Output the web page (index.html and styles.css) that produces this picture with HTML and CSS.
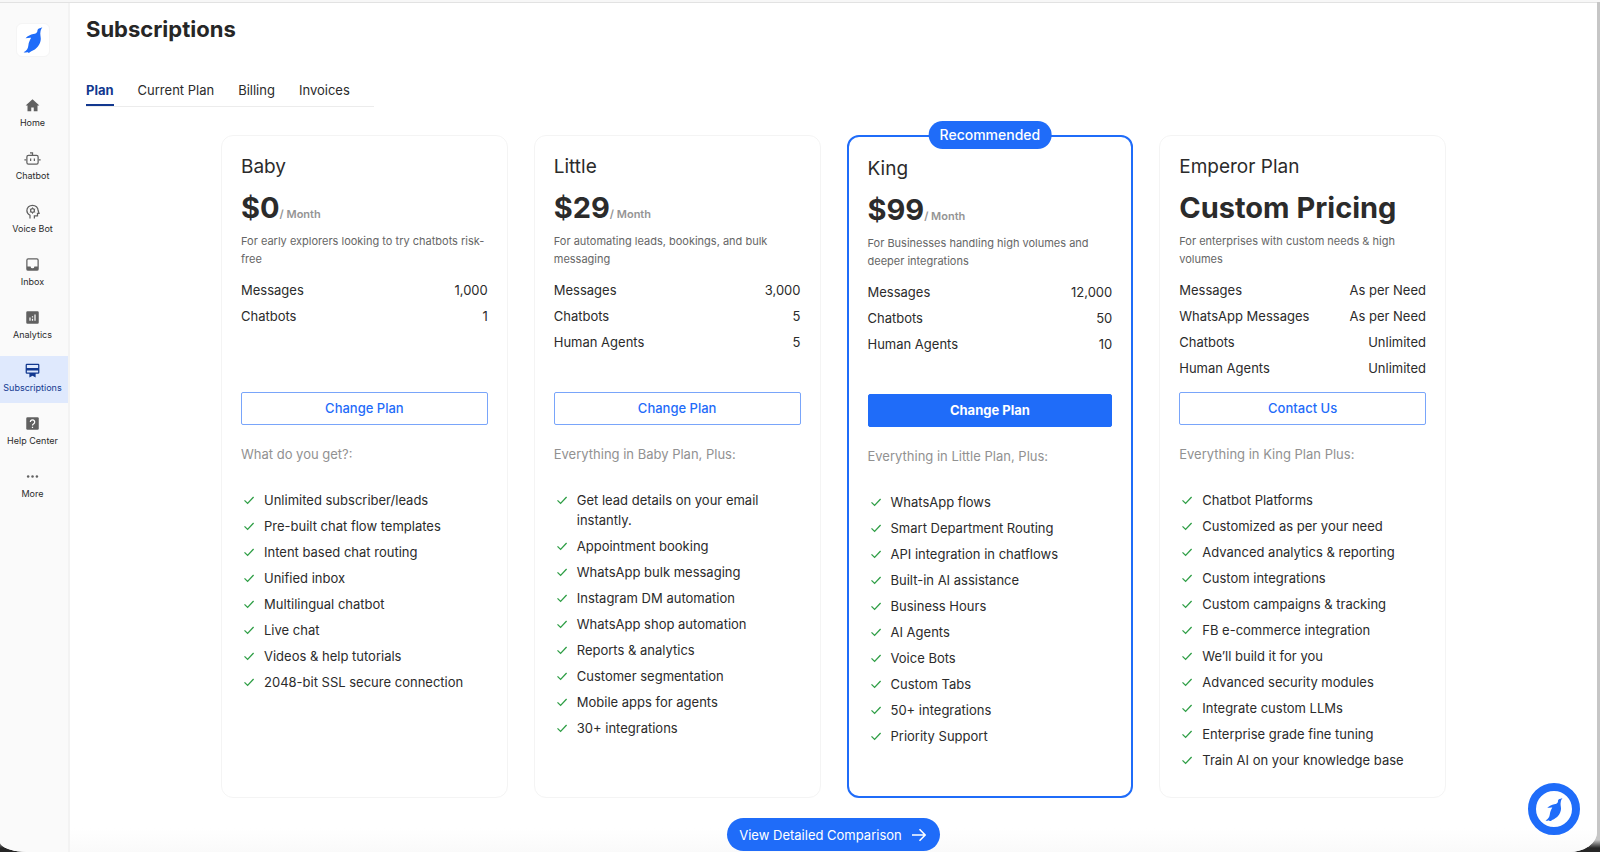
FILE: index.html
```html
<!DOCTYPE html>
<html lang="en">
<head>
<meta charset="utf-8">
<title>Subscriptions</title>
<link rel="stylesheet" href="styles.css">
</head>
<body>
<svg class="defs" aria-hidden="true">
  <symbol id="check" viewBox="0 0 12 12"><path d="M1.5 6.4 4.6 9.4 10.6 3" fill="none" stroke="currentColor" stroke-width="1.3"/></symbol>
  <symbol id="penguin" viewBox="36 24 64 86"><path d="M98 26c-4 2-8 3-11 4-4 2-5 5-5 9-1 5-6 8-13 9-9 2-17 6-25 13 7 0 13-2 18-1-5 9-8 16-9 25-1 9-5 15-15 21 4 2 8 1 12-1l2 3c4 0 7-1 9-4 19-7 31-22 32-40 0-8-3-16-1-24 1-6 3-9 6-14z" fill="#1f6cf9"/></symbol>
</svg>
<div class="window">
  <nav class="sidebar" aria-label="Main">
    <a class="logo" href="#" aria-label="Start page"><svg class="logo-mark"><use href="#penguin"/></svg></a>
    <a class="nav-item" href="#"><svg class="nav-icon" viewBox="0 0 24 24"><path d="M10 21v-6h4v6h6v-9h3L12 2 1 12h3v9z"/></svg>Home</a>
    <a class="nav-item" href="#"><svg class="nav-icon outline" viewBox="0 0 24 24"><path d="M12 7V3H8M2 14H-1m23 0h3M9 12v4m6-4v4"/><rect x="3" y="7" width="18" height="14" rx="2.500"/></svg>Chatbot</a>
    <a class="nav-item" href="#"><svg class="nav-icon outline" viewBox="0 0 24 24"><path d="M8 23v-5C4 16 3 13 3 10.500a9 8.500 0 0 1 18 0L22.500 15H20v4h-5v4"/><circle cx="12" cy="10.500" r="3"/><path d="M12 5.500v2m0 6v2M7.700 8l1.800 1m5 3 1.800 1M7.700 13l1.800-1m5-3 1.800-1" stroke-width="1.600"/></svg>Voice Bot</a>
    <a class="nav-item" href="#"><svg class="nav-icon" viewBox="0 0 24 24"><path d="M19 2H5a3 3 0 0 0-3 3v14a3 3 0 0 0 3 3h14a3 3 0 0 0 3-3V5a3 3 0 0 0-3-3zm1 13h-5a3 3 0 0 1-6 0H4V5a1 1 0 0 1 1-1h14a1 1 0 0 1 1 1z"/></svg>Inbox</a>
    <a class="nav-item" href="#"><svg class="nav-icon" viewBox="0 0 24 24"><path fill-rule="evenodd" d="M4 2h16a2 2 0 0 1 2 2v16a2 2 0 0 1-2 2H4a2 2 0 0 1-2-2V4a2 2 0 0 1 2-2zm3 10v5h2v-5zm4 2v3h2v-3zm0-4v2h2v-2zm4-3v10h2V7z"/></svg>Analytics</a>
    <a class="nav-item active" href="#" aria-current="page"><svg class="nav-icon" viewBox="0 0 24 24"><path fill-rule="evenodd" d="M3 1h18a2 2 0 0 1 2 2v12a2 2 0 0 1-2 2h-4v6l-5-2.500L7 23v-6H3a2 2 0 0 1-2-2V3a2 2 0 0 1 2-2zm0 2v5h18V3zm0 9v3h18v-3z"/></svg>Subscriptions</a>
    <a class="nav-item" href="#"><svg class="nav-icon" viewBox="0 0 24 24"><path d="M4 2h16a2 2 0 0 1 2 2v16a2 2 0 0 1-2 2H4a2 2 0 0 1-2-2V4a2 2 0 0 1 2-2z"/><path d="M8.500 9.500a3.500 3.500 0 1 1 5.500 3c-1.500 1-2 1.300-2 2.800M12 17v2.200" fill="none" stroke="#fff" stroke-width="2"/></svg>Help Center</a>
    <a class="nav-item" href="#"><svg class="nav-icon" viewBox="0 0 24 24"><circle cx="5" cy="12" r="2"/><circle cx="12" cy="12" r="2"/><circle cx="19" cy="12" r="2"/></svg>More</a>
  </nav>
  <main class="content">
    <h1 class="page-title">Subscriptions</h1>
    <nav class="tabs" aria-label="Subscription sections">
      <a class="tab selected" href="#" aria-current="page">Plan</a><a class="tab" href="#">Current Plan</a><a class="tab" href="#">Billing</a><a class="tab" href="#">Invoices</a>
    </nav>
    <div class="plans">
      <section class="card">
        <h2 class="plan-name">Baby</h2>
        <p class="price">$0<span class="period">/ Month</span></p>
        <p class="summary">For early explorers looking to try chatbots risk-free</p>
        <dl class="limits">
          <div class="limit"><dt>Messages</dt><dd>1,000</dd></div>
          <div class="limit"><dt>Chatbots</dt><dd>1</dd></div>
        </dl>
        <button class="choose">Change Plan</button>
        <p class="includes">What do you get?:</p>
        <ul class="features">
          <li><svg class="tick"><use href="#check"/></svg>Unlimited subscriber/leads</li>
          <li><svg class="tick"><use href="#check"/></svg>Pre-built chat flow templates</li>
          <li><svg class="tick"><use href="#check"/></svg>Intent based chat routing</li>
          <li><svg class="tick"><use href="#check"/></svg>Unified inbox</li>
          <li><svg class="tick"><use href="#check"/></svg>Multilingual chatbot</li>
          <li><svg class="tick"><use href="#check"/></svg>Live chat</li>
          <li><svg class="tick"><use href="#check"/></svg>Videos &amp; help tutorials</li>
          <li><svg class="tick"><use href="#check"/></svg>2048-bit SSL secure connection</li>
        </ul>
      </section>
      <section class="card">
        <h2 class="plan-name">Little</h2>
        <p class="price">$29<span class="period">/ Month</span></p>
        <p class="summary">For automating leads, bookings, and bulk messaging</p>
        <dl class="limits">
          <div class="limit"><dt>Messages</dt><dd>3,000</dd></div>
          <div class="limit"><dt>Chatbots</dt><dd>5</dd></div>
          <div class="limit"><dt>Human Agents</dt><dd>5</dd></div>
        </dl>
        <button class="choose">Change Plan</button>
        <p class="includes">Everything in Baby Plan, Plus:</p>
        <ul class="features">
          <li><svg class="tick"><use href="#check"/></svg>Get lead details on your email instantly.</li>
          <li><svg class="tick"><use href="#check"/></svg>Appointment booking</li>
          <li><svg class="tick"><use href="#check"/></svg>WhatsApp bulk messaging</li>
          <li><svg class="tick"><use href="#check"/></svg>Instagram DM automation</li>
          <li><svg class="tick"><use href="#check"/></svg>WhatsApp shop automation</li>
          <li><svg class="tick"><use href="#check"/></svg>Reports &amp; analytics</li>
          <li><svg class="tick"><use href="#check"/></svg>Customer segmentation</li>
          <li><svg class="tick"><use href="#check"/></svg>Mobile apps for agents</li>
          <li><svg class="tick"><use href="#check"/></svg>30+ integrations</li>
        </ul>
      </section>
      <section class="card recommended">
        <span class="badge">Recommended</span>
        <h2 class="plan-name">King</h2>
        <p class="price">$99<span class="period">/ Month</span></p>
        <p class="summary">For Businesses handling high volumes and deeper integrations</p>
        <dl class="limits">
          <div class="limit"><dt>Messages</dt><dd>12,000</dd></div>
          <div class="limit"><dt>Chatbots</dt><dd>50</dd></div>
          <div class="limit"><dt>Human Agents</dt><dd>10</dd></div>
        </dl>
        <button class="choose">Change Plan</button>
        <p class="includes">Everything in Little Plan, Plus:</p>
        <ul class="features">
          <li><svg class="tick"><use href="#check"/></svg>WhatsApp flows</li>
          <li><svg class="tick"><use href="#check"/></svg>Smart Department Routing</li>
          <li><svg class="tick"><use href="#check"/></svg>API integration in chatflows</li>
          <li><svg class="tick"><use href="#check"/></svg>Built-in AI assistance</li>
          <li><svg class="tick"><use href="#check"/></svg>Business Hours</li>
          <li><svg class="tick"><use href="#check"/></svg>AI Agents</li>
          <li><svg class="tick"><use href="#check"/></svg>Voice Bots</li>
          <li><svg class="tick"><use href="#check"/></svg>Custom Tabs</li>
          <li><svg class="tick"><use href="#check"/></svg>50+ integrations</li>
          <li><svg class="tick"><use href="#check"/></svg>Priority Support</li>
        </ul>
      </section>
      <section class="card">
        <h2 class="plan-name">Emperor Plan</h2>
        <p class="price">Custom Pricing</p>
        <p class="summary">For enterprises with custom needs &amp; high volumes</p>
        <dl class="limits">
          <div class="limit"><dt>Messages</dt><dd>As per Need</dd></div>
          <div class="limit"><dt>WhatsApp Messages</dt><dd>As per Need</dd></div>
          <div class="limit"><dt>Chatbots</dt><dd>Unlimited</dd></div>
          <div class="limit"><dt>Human Agents</dt><dd>Unlimited</dd></div>
        </dl>
        <button class="choose">Contact Us</button>
        <p class="includes">Everything in King Plan Plus:</p>
        <ul class="features">
          <li><svg class="tick"><use href="#check"/></svg>Chatbot Platforms</li>
          <li><svg class="tick"><use href="#check"/></svg>Customized as per your need</li>
          <li><svg class="tick"><use href="#check"/></svg>Advanced analytics &amp; reporting</li>
          <li><svg class="tick"><use href="#check"/></svg>Custom integrations</li>
          <li><svg class="tick"><use href="#check"/></svg>Custom campaigns &amp; tracking</li>
          <li><svg class="tick"><use href="#check"/></svg>FB e-commerce integration</li>
          <li><svg class="tick"><use href="#check"/></svg>We’ll build it for you</li>
          <li><svg class="tick"><use href="#check"/></svg>Advanced security modules</li>
          <li><svg class="tick"><use href="#check"/></svg>Integrate custom LLMs</li>
          <li><svg class="tick"><use href="#check"/></svg>Enterprise grade fine tuning</li>
          <li><svg class="tick"><use href="#check"/></svg>Train AI on your knowledge base</li>
        </ul>
      </section>
    </div>
    <button class="compare">View Detailed Comparison<svg class="arrow" viewBox="0 0 14 14"><path d="M0 7h13M7.500 1.200 13.200 7l-5.700 5.800" fill="none" stroke="#fff" stroke-width="1.600"/></svg></button>
  </main>
  <button class="chat" aria-label="Open chat"><svg class="chat-mark"><use href="#penguin"/></svg></button>
</div>
</body>
</html>
```
FILE: styles.css
```css
* { box-sizing: border-box; }

html { height: 100%; }

body {
  height: 100%;
  margin: 0;
  padding: 2px 3px 0 0;
  overflow: hidden;
  background: linear-gradient(#f7f7f7 2px, #c6c6c6 2px, #c6c6c6 calc(100% - 12px), #262626 calc(100% - 4px));
  color: #2b2b2b;
  font-family: Inter, "Liberation Sans", sans-serif;
  font-size: 13px;
  line-height: 20px;
}

h1, h2, p, dl, dd, ul { margin: 0; padding: 0; }
ul { list-style: none; }
a { color: inherit; text-decoration: none; }
button { font: inherit; cursor: pointer; }

.defs { position: absolute; width: 0; height: 0; }

.window {
  position: relative;
  display: flex;
  height: 100%;
  overflow: hidden;
  border-top: 1px solid #e2e2e2;
  border-radius: 0 0 28px 28px / 0 0 20px 10px;
  background: #fff;
}

.sidebar {
  display: flex;
  flex: none;
  flex-direction: column;
  gap: 6px;
  width: 70px;
  padding-top: 20px;
  border-right: 2px solid #f3f3f3;
  background: #fafafa;
}

.logo {
  display: flex;
  align-items: center;
  justify-content: center;
  align-self: center;
  width: 34px;
  height: 34px;
  margin: 0 3px 28px 0;
  border: 1px solid #f5f5f5;
  border-radius: 6px;
  background: #fff;
}

.logo-mark { width: 20px; height: 28px; }

.nav-item {
  display: flex;
  flex-direction: column;
  align-items: center;
  gap: 3px;
  height: 47px;
  padding: 7px 3px 0 0;
  font-size: 9px;
  line-height: 14px;
  white-space: nowrap;
}

.nav-item.active { background: #dfe9fd; color: #12388f; }
.nav-icon { width: 15px; height: 15px; fill: #616161; overflow: visible; }
.nav-icon.outline { fill: none; stroke: #616161; stroke-width: 2; }
.active .nav-icon { fill: #12388f; }

.content {
  display: flex;
  flex: 1;
  flex-direction: column;
  min-width: 0;
  padding: 10px 16px 0;
  background: linear-gradient(#fff calc(100% - 24px), #fafafa 100%);
}

.page-title {
  font-size: 22px;
  font-weight: 700;
  line-height: 32px;
  color: #262626;
}

.tabs {
  display: flex;
  gap: 24px;
  align-self: flex-start;
  margin-top: 35px;
  padding-right: 24px;
  border-bottom: 1px solid #ececec;
}

.tab { padding-bottom: 4px; border-bottom: 2px solid transparent; }
.tab.selected { border-color: #12388f; color: #12388f; font-weight: 700; }

.plans {
  display: grid;
  grid-template-columns: repeat(4, minmax(0, 1fr));
  gap: 26px;
  width: 100%;
  max-width: 1225px;
  margin: 28px auto 0;
}

.card {
  position: relative;
  min-height: 663px;
  padding: 19px;
  border: 1px solid #f4f4f4;
  border-radius: 12px;
}

.card.recommended { padding-top: 20px; border: 2px solid #1f6cf9; }

.badge {
  position: absolute;
  top: -16px;
  left: 50%;
  padding: 4px 11px;
  border-radius: 14px;
  background: #1f6cf9;
  color: #fff;
  font-size: 14px;
  font-weight: 500;
  transform: translateX(-50%);
}

.plan-name { font-size: 19px; font-weight: 400; line-height: 24px; }

.price {
  height: 40px;
  margin-top: 9px;
  font-size: 29px;
  font-weight: 700;
  line-height: 40px;
  white-space: nowrap;
}

.period { color: #949494; font-size: 11px; font-weight: 600; }

.summary {
  min-height: 36px;
  margin-top: 4px;
  color: #666;
  font-size: 11px;
  line-height: 18px;
}

.limits {
  display: flex;
  flex-direction: column;
  gap: 6px;
  min-height: 112px;
  margin-top: 12px;
}

.limit { display: flex; justify-content: space-between; }

.choose {
  display: block;
  width: 100%;
  height: 33px;
  padding-bottom: 3px;
  border: 1px solid #79a5fa;
  border-radius: 2px;
  background: #fff;
  color: #1f6cf9;
  font-weight: 500;
}

.recommended .choose { border-color: #1f6cf9; background: #1f6cf9; color: #fff; font-weight: 700; }

.includes { margin-top: 19px; color: #919191; }

.features {
  display: flex;
  flex-direction: column;
  gap: 6px;
  margin-top: 26px;
}

.features li { display: flex; gap: 9px; padding: 0 20px 0 2px; }
.tick { flex: none; width: 12px; height: 12px; margin-top: 4px; color: #2e9e45; }

.compare {
  display: flex;
  flex: none;
  align-items: center;
  align-self: center;
  gap: 10px;
  height: 33px;
  margin: 20px 0 0;
  padding: 0 14px 0 12px;
  border: 0;
  border-radius: 17px;
  background: #1f6cf9;
  color: #fff;
}

.arrow { width: 14px; height: 14px; }

.chat {
  position: absolute;
  right: 17px;
  bottom: 17px;
  display: flex;
  align-items: center;
  justify-content: center;
  width: 52px;
  height: 52px;
  padding: 0;
  border: 8px solid #1f6cf9;
  border-radius: 50%;
  background: #fff;
}

.chat-mark { width: 18px; height: 25px; }
```
